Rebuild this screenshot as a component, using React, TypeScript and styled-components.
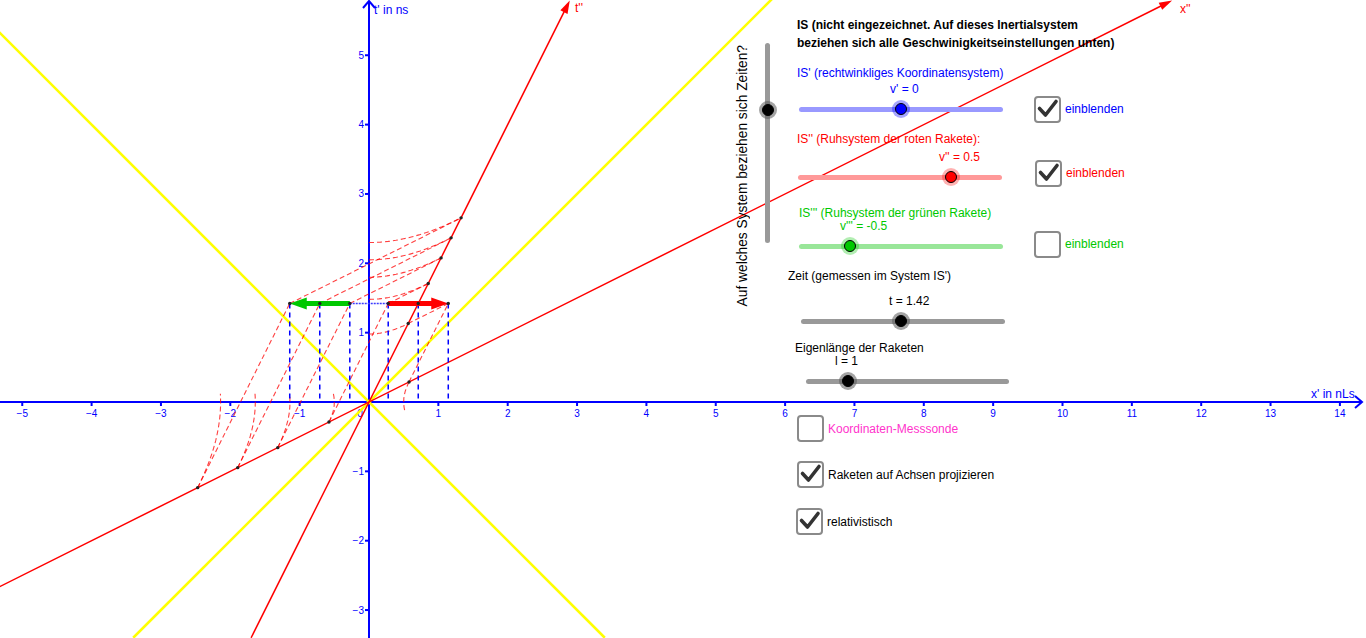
import React from 'react';
import styled, { createGlobalStyle } from 'styled-components';

const GlobalStyle = createGlobalStyle`
  html, body {
    margin: 0;
    padding: 0;
    background: #fff;
  }
  body {
    font-family: "Liberation Sans", Arial, sans-serif;
  }
`;

// graph scale (px per unit) and origin
const U = 69.35;
const OX = 369;
const OY = 402;
const px = (x: number) => OX + x * U;
const py = (t: number) => OY - t * U;

const T = 1.42; // current time
const V = 0.5; // rocket speed
const rocketXs = [-1.143, -0.71, -0.277, 0.277, 0.71, 1.143];

const range = (a: number, b: number, n = 24) =>
  Array.from({ length: n + 1 }, (_, i) => a + ((b - a) * i) / n);

const toPath = (pts: number[][]) =>
  pts.map(([x, t], i) => `${i ? 'L' : 'M'}${px(x).toFixed(1)},${py(t).toFixed(1)}`).join(' ');

const Applet = styled.div`
  position: relative;
  width: 1366px;
  height: 638px;
  overflow: hidden;
  background: #fff;
`;

const Graph = styled.svg`
  display: block;
  font-family: "Liberation Sans", Arial, sans-serif;
`;

const ControlLayer = styled.div`
  position: absolute;
  top: 0;
  left: 730px;
  display: flex;
  align-items: flex-start;
  font-size: 12px;
  color: #000;
`;

const TimeRail = styled.div`
  width: 58px;
  display: flex;
  align-items: flex-start;
  padding-top: 43px;
`;

const RailCaption = styled.div`
  writing-mode: vertical-rl;
  transform: rotate(180deg);
  font-size: 13.75px;
  line-height: 16px;
  margin-left: 5px;
  margin-top: 2px;
  white-space: nowrap;
`;

const VerticalTrack = styled.div`
  position: relative;
  width: 5px;
  height: 200px;
  margin-left: 14px;
  border-radius: 3px;
  background: #999;
`;

const Controls = styled.div`
  display: flex;
  flex-direction: column;
  align-items: flex-start;
  padding-top: 16px;
`;

const Heading = styled.div`
  margin-left: 9px;
  font-weight: bold;
  line-height: 18px;
  white-space: nowrap;
`;

const Caption = styled.div<{ $top: number; $left: number; $color?: string }>`
  margin-top: ${(p) => p.$top}px;
  margin-left: ${(p) => p.$left}px;
  line-height: 14px;
  color: ${(p) => p.$color ?? '#000'};
  white-space: nowrap;
`;

const SliderBlock = styled.div<{ $top: number }>`
  margin-top: ${(p) => p.$top}px;
  display: flex;
  flex-direction: column;
  align-items: flex-start;
`;

const ValueText = styled.div<{ $left: number; $color: string }>`
  margin-left: ${(p) => p.$left}px;
  line-height: 14px;
  color: ${(p) => p.$color};
  white-space: nowrap;
`;

const TrackRow = styled.div`
  display: flex;
  align-items: center;
  height: 14px;
  margin-top: 6px;
`;

const Track = styled.div<{ $left: number; $width: number; $color: string }>`
  position: relative;
  flex: none;
  width: ${(p) => p.$width}px;
  height: 5px;
  margin-left: ${(p) => p.$left}px;
  border-radius: 3px;
  background: ${(p) => p.$color};
`;

const Knob = styled.span<{ $fill: string; $halo: string }>`
  position: absolute;
  width: 12px;
  height: 12px;
  margin: -6px 0 0 -6px;
  box-sizing: border-box;
  border-radius: 50%;
  border: 1px solid #000;
  background: ${(p) => p.$fill};
  box-shadow: 0 0 0 3px ${(p) => p.$halo};
`;

const Toggle = styled.label<{ $gap: number; $shift: number; $color: string }>`
  display: flex;
  align-items: center;
  gap: 4px;
  margin-left: ${(p) => p.$gap}px;
  margin-top: ${(p) => p.$shift * 2}px;
  color: ${(p) => p.$color};
  white-space: nowrap;
`;

const Option = styled.label<{ $top: number; $left: number; $color?: string }>`
  display: flex;
  align-items: center;
  gap: 4px;
  margin-top: ${(p) => p.$top}px;
  margin-left: ${(p) => p.$left}px;
  color: ${(p) => p.$color ?? '#000'};
  white-space: nowrap;
`;

const Box = styled.span`
  flex: none;
  width: 27px;
  height: 27px;
  box-sizing: border-box;
  border: 2px solid #8a8a8a;
  border-radius: 4px;
  background: #fff;
  display: flex;
`;

const CheckBox: React.FC<{ checked: boolean }> = ({ checked }) => (
  <Box>
    {checked && (
      <svg width="23" height="23" viewBox="0 0 23 23">
        <polyline
          points="3.5,10.5 9.5,17 20,3.5"
          fill="none"
          stroke="#333"
          strokeWidth="3.6"
          strokeLinecap="round"
          strokeLinejoin="round"
        />
      </svg>
    )}
  </Box>
);

interface SliderProps {
  top: number;
  value: string;
  valueLeft: number;
  valueColor: string;
  trackLeft: number;
  trackWidth?: number;
  trackColor: string;
  pos: number;
  knob: string;
  halo: string;
  toggle?: { checked: boolean; gap: number; shift: number; color: string };
}

const Slider: React.FC<SliderProps> = ({
  top, value, valueLeft, valueColor, trackLeft, trackWidth = 204, trackColor, pos, knob, halo, toggle,
}) => (
  <SliderBlock $top={top}>
    <ValueText $left={valueLeft} $color={valueColor}>{value}</ValueText>
    <TrackRow>
      <Track $left={trackLeft} $width={trackWidth} $color={trackColor}>
        <Knob $fill={knob} $halo={halo} style={{ left: `${pos * 100}%`, top: '50%' }} />
      </Track>
      {toggle && (
        <Toggle $gap={toggle.gap} $shift={toggle.shift} $color={toggle.color}>
          <CheckBox checked={toggle.checked} />
          einblenden
        </Toggle>
      )}
    </TrackRow>
  </SliderBlock>
);

const BLUE = '#0000ff';
const RED = '#ff0000';
const GREEN = '#00c800';

const Diagram: React.FC = () => {
  const xTicks = range(-5, 14, 19).filter((i) => i !== 0);
  const yTicks = [-3, -2, -1, 1, 2, 3, 4, 5];
  const label = (n: number) => (n < 0 ? `\u2212${-n}` : `${n}`);

  // points where simultaneity / world lines meet the t'' and x'' axes
  const others = rocketXs.filter((x) => Math.abs(x - V * T) > 0.01);
  const tHits = others.map((xr) => (T - V * xr) / (1 - V * V));
  const xHits = others.map((xr) => (xr - V * T) / (1 - V * V));

  const tipT = 5.79;
  const tPrimeTip = [px(V * tipT), py(tipT)];
  const xPrimeTip = [px(tipT / V), py(tipT)];

  const arrowHead = (tip: number[], dx: number, dy: number, len = 13, w = 4) => {
    const l = Math.hypot(dx, dy);
    const ux = dx / l;
    const uy = dy / l;
    const bx = tip[0] - ux * len;
    const by = tip[1] - uy * len;
    return `${tip[0]},${tip[1]} ${bx - uy * w},${by + ux * w} ${bx + uy * w},${by - ux * w}`;
  };

  const ry = py(T);

  return (
    <Graph width="1366" height="638" viewBox="0 0 1366 638">
      {/* axes */}
      <g stroke={BLUE} strokeWidth="2" fill="none">
        <line x1="0" y1={OY} x2="1362" y2={OY} />
        <polyline points={`1355,396 1362,402 1355,408`} />
        <line x1={OX} y1="638" x2={OX} y2="1" />
        <polyline points={`363,8 369,1 375,8`} />
        {xTicks.map((i) => (
          <line key={`xt${i}`} x1={px(i)} y1={OY} x2={px(i)} y2={OY + 4} />
        ))}
        {yTicks.map((i) => (
          <line key={`yt${i}`} x1={OX - 4} y1={py(i)} x2={OX} y2={py(i)} />
        ))}
      </g>
      <g fill={BLUE} fontSize="10">
        {xTicks.map((i) => (
          <text key={`xl${i}`} x={px(i)} y="417" textAnchor="middle">{label(i)}</text>
        ))}
        {yTicks.map((i) => (
          <text key={`yl${i}`} x="364" y={py(i) + 3.5} textAnchor="end">{label(i)}</text>
        ))}
        <text x="360" y="417" textAnchor="middle">0</text>
      </g>
      <g fill={BLUE} fontSize="12">
        <text x="374" y="14">t' in ns</text>
        <text x="1311" y="398">x' in nLs</text>
      </g>

      {/* light cone */}
      <g stroke="#ffff00" strokeWidth="2.6">
        <line x1={px(-3.4)} y1={py(-3.4)} x2={px(5.85)} y2={py(5.85)} />
        <line x1={px(-5.4)} y1={py(5.4)} x2={px(3.4)} y2={py(-3.4)} />
      </g>

      {/* IS'' axes */}
      <g stroke={RED} strokeWidth="1.5">
        <line x1={px(V * -3.4)} y1={py(-3.4)} x2={px(V * (tipT - 0.15))} y2={py(tipT - 0.15)} />
        <line x1={px(-5.4)} y1={py(-5.4 * V)} x2={px((tipT - 0.08) / V)} y2={py(tipT - 0.08)} />
      </g>
      <g fill={RED}>
        <polygon points={arrowHead(tPrimeTip, V, -1)} />
        <polygon points={arrowHead(xPrimeTip, 1, -V)} />
      </g>
      <g fill={RED} fontSize="12">
        <text x="575" y="12">t''</text>
        <text x="1180" y="13">x''</text>
      </g>

      {/* construction lines */}
      <g stroke={RED} strokeOpacity="0.75" strokeWidth="1.1" strokeDasharray="5 3" fill="none">
        {tHits.map((t0, i) => (
          <React.Fragment key={`th${i}`}>
            <path d={toPath(range(0, V * t0).map((x) => [x, Math.sqrt((1 - V * V) * t0 * t0 + x * x)]))} />
            <path d={toPath([[others[i], T], [V * t0, t0]])} />
          </React.Fragment>
        ))}
        {xHits.map((x0, i) => (
          <React.Fragment key={`xh${i}`}>
            <path
              d={toPath(
                range(V * x0, -0.12 * Math.sign(x0)).map((t) => [
                  Math.sign(x0) * Math.sqrt((1 - V * V) * x0 * x0 + t * t),
                  t,
                ]),
              )}
            />
            <path d={toPath([[x0, V * x0], [others[i], T]])} />
          </React.Fragment>
        ))}
      </g>
      <g stroke={BLUE} strokeWidth="1.5" strokeDasharray="5 4">
        {rocketXs.map((x) => (
          <line key={`pr${x}`} x1={px(x)} y1={ry} x2={px(x)} y2={OY} />
        ))}
      </g>

      {/* rockets */}
      <line x1={px(-1.143)} y1={ry} x2={px(1.143)} y2={ry} stroke="#3b3bff" strokeWidth="1.5" strokeDasharray="2 1" />
      <line x1={px(0.277)} y1={ry} x2={px(1.143) - 14} y2={ry} stroke={RED} strokeWidth="5" />
      <polygon points={arrowHead([px(1.143), ry], 1, 0, 17, 6)} fill={RED} />
      <line x1={px(-0.277)} y1={ry} x2={px(-1.143) + 14} y2={ry} stroke={GREEN} strokeWidth="5" />
      <polygon points={arrowHead([px(-1.143), ry], -1, 0, 17, 6)} fill={GREEN} />

      <g fill="#222">
        {rocketXs.map((x) => (
          <circle key={`rd${x}`} cx={px(x)} cy={ry} r="1.7" />
        ))}
        {tHits.map((t0) => (
          <circle key={`td${t0}`} cx={px(V * t0)} cy={py(t0)} r="1.7" />
        ))}
        {xHits.map((x0) => (
          <circle key={`xd${x0}`} cx={px(x0)} cy={py(V * x0)} r="1.7" />
        ))}
      </g>
    </Graph>
  );
};

export default function App() {
  return (
    <>
      <GlobalStyle />
      <Applet>
        <Diagram />
        <ControlLayer>
          <TimeRail>
            <RailCaption>Auf welches System beziehen sich Zeiten?</RailCaption>
            <VerticalTrack>
              <Knob $fill="#000" $halo="rgba(90,90,90,0.55)" style={{ left: '50%', top: '67px' }} />
            </VerticalTrack>
          </TimeRail>
          <Controls>
            <Heading>
              IS (nicht eingezeichnet. Auf dieses Inertialsystem
              <br />
              beziehen sich alle Geschwinigkeitseinstellungen unten)
            </Heading>

            <Caption $top={14} $left={9} $color={BLUE}>IS' (rechtwinkliges Koordinatensystem)</Caption>
            <Slider
              top={2}
              value="v' = 0"
              valueLeft={102}
              valueColor={BLUE}
              trackLeft={11}
              trackColor="#9999ff"
              pos={0.5}
              knob={BLUE}
              halo="rgba(0,0,255,0.35)"
              toggle={{ checked: true, gap: 31, shift: 0, color: BLUE }}
            />

            <Caption $top={16} $left={9} $color={RED}>IS'' (Ruhsystem der roten Rakete):</Caption>
            <Slider
              top={4}
              value="v'' = 0.5"
              valueLeft={151}
              valueColor={RED}
              trackLeft={10}
              trackColor="#ff9999"
              pos={0.75}
              knob={RED}
              halo="rgba(255,0,0,0.3)"
              toggle={{ checked: true, gap: 33, shift: -4, color: RED }}
            />

            <Caption $top={22} $left={11} $color={GREEN}>IS''' (Ruhsystem der grünen Rakete)</Caption>
            <Slider
              top={-1}
              value="v''' = -0.5"
              valueLeft={52}
              valueColor={GREEN}
              trackLeft={11}
              trackColor="#99e699"
              pos={0.25}
              knob={GREEN}
              halo="rgba(0,200,0,0.3)"
              toggle={{ checked: false, gap: 31, shift: -2, color: GREEN }}
            />

            <Caption $top={16} $left={0}>Zeit (gemessen im System IS')</Caption>
            <Slider
              top={11}
              value="t = 1.42"
              valueLeft={101}
              valueColor="#000"
              trackLeft={13}
              trackColor="#999"
              pos={0.49}
              knob="#000"
              halo="rgba(90,90,90,0.55)"
            />

            <Caption $top={13} $left={7}>Eigenlänge der Raketen</Caption>
            <Slider
              top={-1}
              value="l = 1"
              valueLeft={47}
              valueColor="#000"
              trackLeft={18}
              trackWidth={203}
              trackColor="#999"
              pos={0.207}
              knob="#000"
              halo="rgba(90,90,90,0.55)"
            />

            <Option $top={27} $left={9} $color="#ff33cc">
              <CheckBox checked={false} />
              Koordinaten-Messsonde
            </Option>
            <Option $top={19} $left={9}>
              <CheckBox checked />
              Raketen auf Achsen projizieren
            </Option>
            <Option $top={20} $left={8}>
              <CheckBox checked />
              relativistisch
            </Option>
          </Controls>
        </ControlLayer>
      </Applet>
    </>
  );
}
